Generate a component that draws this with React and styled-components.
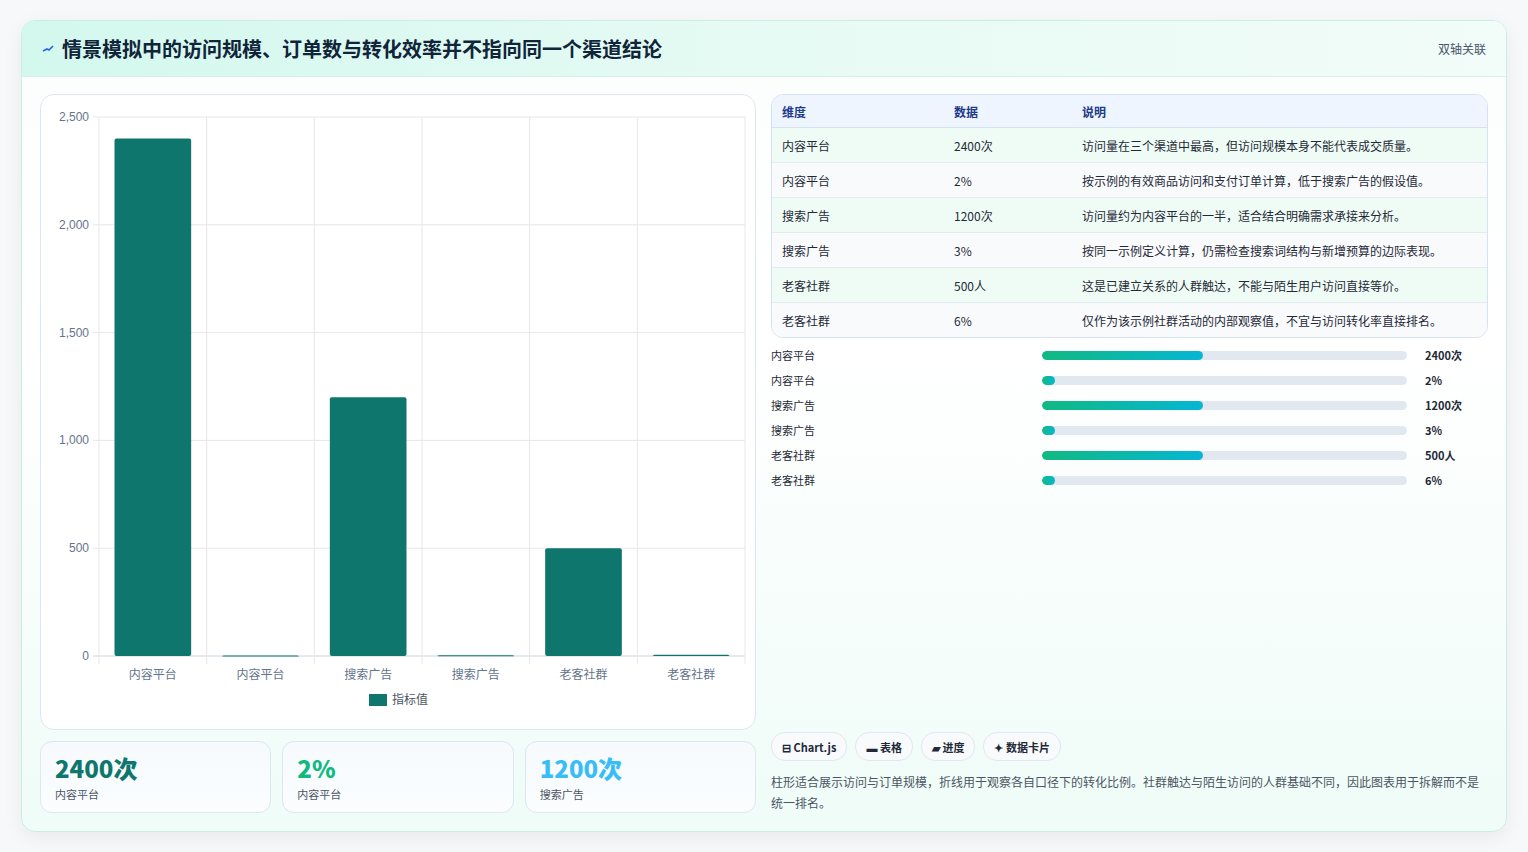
import React from "react";
import styled, { createGlobalStyle } from "styled-components";

const Global = createGlobalStyle`
  body { margin: 0; background: #f7f8f9; font-family: "Noto Sans CJK SC", "Noto Sans", sans-serif; }
`;

const rows = [
  ["内容平台", "2400次", "访问量在三个渠道中最高，但访问规模本身不能代表成交质量。", 2400],
  ["内容平台", "2%", "按示例的有效商品访问和支付订单计算，低于搜索广告的假设值。", 2],
  ["搜索广告", "1200次", "访问量约为内容平台的一半，适合结合明确需求承接来分析。", 1200],
  ["搜索广告", "3%", "按同一示例定义计算，仍需检查搜索词结构与新增预算的边际表现。", 3],
  ["老客社群", "500人", "这是已建立关系的人群触达，不能与陌生用户访问直接等价。", 500],
  ["老客社群", "6%", "仅作为该示例社群活动的内部观察值，不宜与访问转化率直接排名。", 6],
];

const Page = styled.div`
  padding: 20px 21px 21px 21px;
`;
const Card = styled.div`
  border: 1px solid #c9efe3;
  border-radius: 14px;
  overflow: hidden;
  background: linear-gradient(180deg, #fbfefd 0%, #ffffff 40%, #effcf7 100%);
  box-shadow: 0 6px 20px rgba(0, 0, 0, 0.06);
`;
const Header = styled.div`
  height: 55px;
  display: flex;
  align-items: center;
  justify-content: space-between;
  padding: 0 20px;
  background: linear-gradient(90deg, #d3f8ee, #e9fbf5 60%, #f2fcf8);
  border-bottom: 1px solid #d6f1e8;
`;
const Title = styled.h1`
  margin: 0;
  font-size: 20px;
  font-weight: 700;
  color: #10243a;
  display: flex;
  align-items: center;
  gap: 8px;
`;
const Tag = styled.span`
  font-size: 12px;
  color: #475569;
`;
const Body = styled.div`
  display: grid;
  grid-template-columns: 716px 1fr;
  gap: 15px;
  padding: 17px 18px 18px 18px;
`;
const Col = styled.div`
  display: flex;
  flex-direction: column;
  gap: 11px;
`;
const ChartBox = styled.div`
  height: 634px;
  border: 1px solid #dde7f0;
  border-radius: 14px;
  background: #fff;
`;
const Stats = styled.div`
  display: grid;
  grid-template-columns: repeat(3, 1fr);
  gap: 11px;
`;
const Stat = styled.div`
  height: 72px;
  border: 1px solid #dde7f0;
  border-radius: 12px;
  background: linear-gradient(180deg, #f6fafd, #fbfdff);
  padding: 10px 14px;
  box-sizing: border-box;
`;
const StatVal = styled.div`
  font-size: 24px;
  font-weight: 800;
  color: ${(p) => p.c};
  line-height: 32px;
`;
const StatLbl = styled.div`
  font-size: 11px;
  color: #4b5563;
  margin-top: 2px;
`;
const Table = styled.table`
  width: 100%;
  border-collapse: separate;
  border-spacing: 0;
  border: 1px solid #d6e2ee;
  border-radius: 12px;
  overflow: hidden;
  font-size: 12px;
  th {
    text-align: left;
    color: #1e3a8a;
    font-weight: 600;
    background: #eef5ff;
    height: 32px;
    padding: 0 10px;
    border-bottom: 1px solid #d6e2ee;
  }
  td {
    height: 34px;
    padding: 0 10px;
    color: #1f2937;
    border-bottom: 1px solid #e3eaf1;
  }
  tr:last-child td { border-bottom: none; }
  tbody tr:nth-child(odd) td { background: #effcf5; }
  tbody tr:nth-child(even) td { background: #f8fafc; }
`;
const Bars = styled.div`
  display: flex;
  flex-direction: column;
  gap: 7px;
  margin-top: 8px;
  font-size: 11px;
`;
const BarRow = styled.div`
  display: grid;
  grid-template-columns: 271px 374px 1fr;
  gap: 0;
  align-items: center;
  height: 18px;
  color: #1f2937;
`;
const Track = styled.div`
  height: 9px;
  border-radius: 5px;
  background: #e2e8f0;
  margin-right: 9px;
  overflow: hidden;
`;
const Fill = styled.div`
  height: 100%;
  border-radius: 5px;
  background: linear-gradient(90deg, #10b981, #06b6d4);
`;
const Val = styled.span`
  font-weight: 700;
  padding-left: 9px;
`;
const Spacer = styled.div`
  flex: 1;
`;
const Chips = styled.div`
  display: flex;
  gap: 8px;
`;
const Chip = styled.span`
  height: 27px;
  padding: 0 10px;
  border: 1px solid #e2e8f0;
  border-radius: 14px;
  background: #f8fafc;
  font-size: 11px;
  font-weight: 600;
  color: #1f2937;
  display: flex;
  align-items: center;
`;
const Note = styled.p`
  margin: 10px 0 0;
  font-size: 12px;
  line-height: 21px;
  color: #4b5563;
`;

const vals = [2400, 2, 1200, 3, 500, 6];
const cats = ["内容平台", "内容平台", "搜索广告", "搜索广告", "老客社群", "老客社群"];

function Chart() {
  const x0 = 58, x1 = 704, y0 = 22, y1 = 561;
  const w = (x1 - x0) / 6;
  const sy = (v) => y1 - ((y1 - y0) * v) / 2500;
  return (
    <svg width="716" height="634" style={{ display: "block" }}>
      {[0, 500, 1000, 1500, 2000, 2500].map((t) => (
        <g key={t}>
          <line x1={x0 - 6} x2={x1} y1={sy(t)} y2={sy(t)} stroke={t === 0 ? "#cbd5e1" : "#e5e7eb"} />
          <text x={x0 - 10} y={sy(t) + 4} textAnchor="end" fontSize="12" fill="#64748b" fontFamily="Liberation Sans">
            {t.toLocaleString("en-US")}
          </text>
        </g>
      ))}
      {[0, 1, 2, 3, 4, 5, 6].map((i) => (
        <line key={i} x1={x0 + i * w} x2={x0 + i * w} y1={y0} y2={y1 + 8} stroke="#e5e7eb" />
      ))}
      {vals.map((v, i) => (
        <g key={i}>
          <rect x={x0 + i * w + 15.5} width={w - 31} y={sy(v)} height={Math.max(y1 - sy(v), 1)} rx="2" fill="#0f766e" />
          <text x={x0 + i * w + w / 2} y={y1 + 23} textAnchor="middle" fontSize="12" fill="#64748b">{cats[i]}</text>
        </g>
      ))}
      <rect x="328" y="599" width="18" height="12" fill="#0f766e" />
      <text x="351" y="609" fontSize="12" fill="#4b5563">指标值</text>
    </svg>
  );
}

export default function App() {
  return (
    <Page>
      <Global />
      <Card>
        <Header>
          <Title>
            <svg width="12" height="10" viewBox="0 0 12 10"><path d="M1 7 L5 5 L7 6 L11 2" stroke="#2563eb" strokeWidth="1.6" fill="none" /></svg>
            情景模拟中的访问规模、订单数与转化效率并不指向同一个渠道结论
          </Title>
          <Tag>双轴关联</Tag>
        </Header>
        <Body>
          <Col>
            <ChartBox><Chart /></ChartBox>
            <Stats>
              <Stat><StatVal c="#0f766e">2400次</StatVal><StatLbl>内容平台</StatLbl></Stat>
              <Stat><StatVal c="#10b981">2%</StatVal><StatLbl>内容平台</StatLbl></Stat>
              <Stat><StatVal c="#38bdf8">1200次</StatVal><StatLbl>搜索广告</StatLbl></Stat>
            </Stats>
          </Col>
          <Col style={{ gap: 0 }}>
            <Table>
              <thead><tr><th style={{ width: 152 }}>维度</th><th style={{ width: 108 }}>数据</th><th>说明</th></tr></thead>
              <tbody>
                {rows.map((r, i) => (
                  <tr key={i}><td>{r[0]}</td><td>{r[1]}</td><td>{r[2]}</td></tr>
                ))}
              </tbody>
            </Table>
            <Bars>
              {rows.map((r, i) => (
                <BarRow key={i}>
                  <span>{r[0]}</span>
                  <Track><Fill style={{ width: r[3] > 100 ? "44%" : "3.5%" }} /></Track>
                  <Val>{r[1]}</Val>
                </BarRow>
              ))}
            </Bars>
            <Spacer />
            <Chips>
              <Chip>⊟ Chart.js</Chip>
              <Chip>▬ 表格</Chip>
              <Chip>▰ 进度</Chip>
              <Chip>✦ 数据卡片</Chip>
            </Chips>
            <Note>柱形适合展示访问与订单规模，折线用于观察各自口径下的转化比例。社群触达与陌生访问的人群基础不同，因此图表用于拆解而不是统一排名。</Note>
          </Col>
        </Body>
      </Card>
    </Page>
  );
}
